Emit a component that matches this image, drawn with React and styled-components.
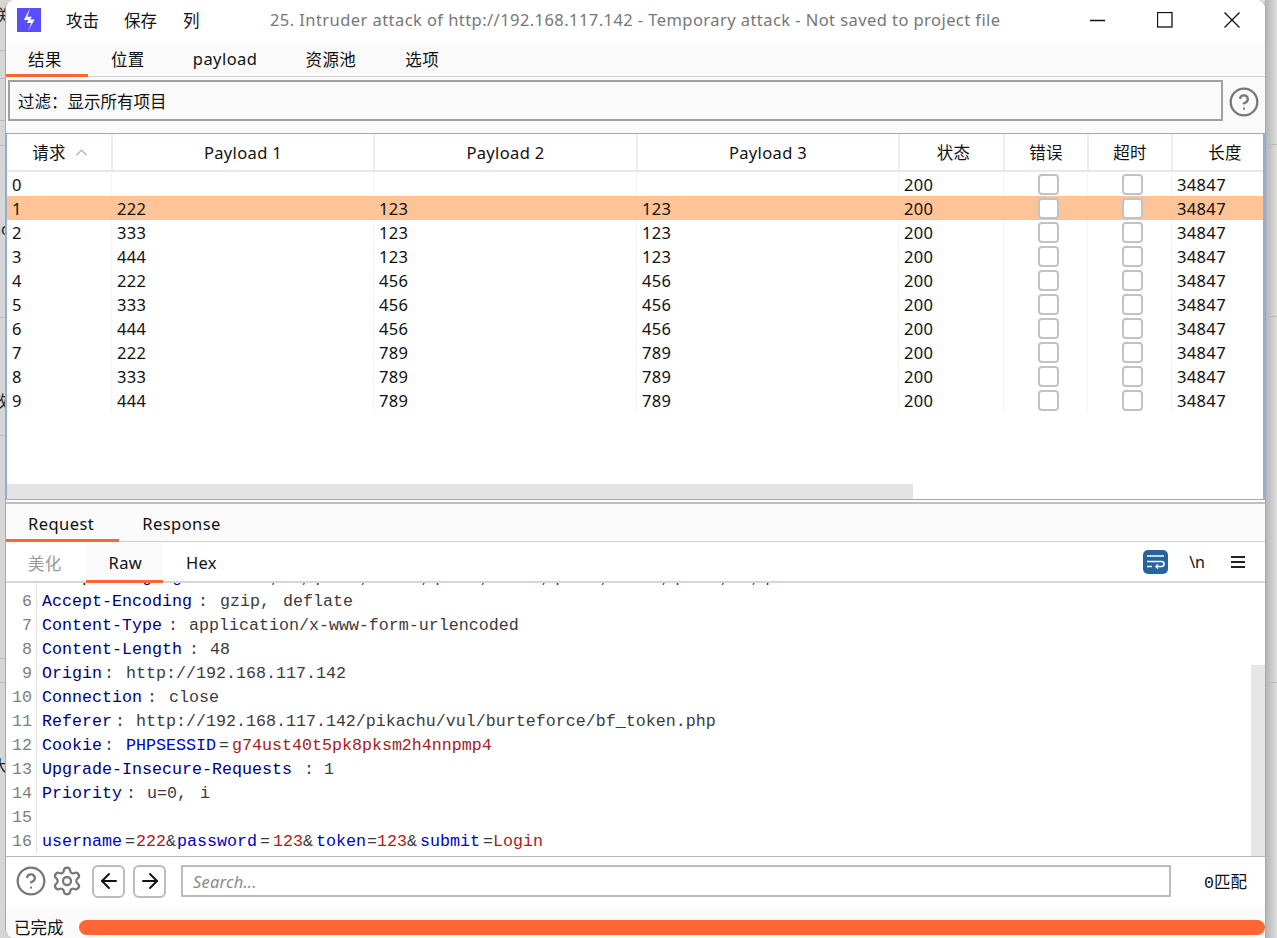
import React from "react";
import styled, { createGlobalStyle } from "styled-components";
import { ChevronUp, CircleHelp, Settings, ArrowLeft, ArrowRight } from "lucide-react";

const sans = `"Noto Sans", "Noto Sans CJK SC", sans-serif`;
const mono = `"Liberation Mono", "Noto Sans CJK SC", monospace`;

const GlobalStyle = createGlobalStyle`
  html, body {
    margin: 0;
    padding: 0;
    height: 938px;
    overflow: hidden;
    background: #dcdcdc;
  }
  * { box-sizing: border-box; }
`;

// what peeks out from behind the window
const Desktop = styled.div`
  position: relative;
  display: flex;
  width: 1277px;
  height: 938px;
  padding: 0 11px 0 5px;
  background: linear-gradient(90deg, #d6d6d6 0, #d6d6d6 1%, #dcdcdc 1%, #dcdcdc 99%, #b4b4b4 99.1%, #dedede 100%);
  font-family: ${sans};
  overflow: hidden;
`;

const DesktopLine = styled.div`
  position: absolute;
  left: ${(p) => (p.$right ? "1265px" : "0")};
  width: ${(p) => (p.$right ? "12px" : "6px")};
  top: ${(p) => p.$y}px;
  height: 1px;
  background: #b8b8b8;
`;

const DesktopGlyph = styled.div`
  position: absolute;
  left: -8px;
  top: ${(p) => p.$y}px;
  width: 13px;
  overflow: hidden;
  text-align: right;
  font-size: 16px;
  line-height: 20px;
  color: #222;
  white-space: nowrap;
`;

const Win = styled.div`
  position: relative;
  flex: 1;
  display: flex;
  flex-direction: column;
  min-width: 0;
  background: #fff;
  border-left: 1px solid #a8a8a8;
  border-right: 1px solid #a8a8a8;
  border-radius: 9px 9px 0 9px;
  font-size: 16.5px;
  color: #111;
  overflow: hidden;
`;

const TitleBar = styled.div`
  display: flex;
  align-items: center;
  height: 43px;
  flex: none;
  padding-left: 11px;
  padding-bottom: 4px;
  background: #fff;
`;

const Logo = styled.div`
  width: 24px;
  height: 24px;
  background: #5a4dff;
  display: flex;
  align-items: center;
  justify-content: center;
  margin-right: 25px;
`;

const MenuItem = styled.span`
  width: ${(p) => p.$w}px;
`;

const Title = styled.span`
  width: 729px;
  flex: none;
  color: #777;
  letter-spacing: 0.43px;
  white-space: nowrap;
  margin-left: 5px;
`;

const WinButtons = styled.div`
  display: flex;
  margin-left: 91px;
  gap: 51px;
`;

const TabBar = styled.div`
  display: flex;
  flex: none;
  height: ${(p) => p.$h}px;
  background: #fafafa;
  border-bottom: 1px solid #cfcfcf;
`;

const Tab = styled.div`
  display: flex;
  align-items: center;
  padding: ${(p) => p.$pt || 0}px ${(p) => p.$pr}px 0 ${(p) => p.$pl}px;
  border-bottom: 3px solid ${(p) => (p.$active ? "#ff6633" : "transparent")};
  margin-bottom: -1px;
  white-space: nowrap;
  letter-spacing: 0.45px;
`;

const FilterRow = styled.div`
  display: flex;
  flex: none;
  align-items: flex-start;
  height: 56px;
  padding: 3px 0 0 2px;
  background: #fafafa;
`;

const FilterBox = styled.div`
  width: 1215px;
  flex: none;
  height: 41px;
  border: 2px solid #a0a0a0;
  display: flex;
  align-items: center;
  padding-left: 8px;
`;

const HelpWrap = styled.div`
  margin: 6px 0 0 5px;
  display: flex;
  color: #777;
`;

const TableBox = styled.div`
  flex: none;
  height: 367px;
  border: 1px solid #8fb0d4;
  border-right-width: 2px;
  display: flex;
  flex-direction: column;
  background: #fff;
`;

const Columns = "104px 262px 263px 262px 105px 84px 84px 1fr";

const HeadRow = styled.div`
  display: grid;
  grid-template-columns: ${Columns};
  height: 38px;
  flex: none;
  border-bottom: 2px solid #e8e8e8;
`;

const HeadCell = styled.div`
  display: flex;
  align-items: center;
  justify-content: center;
  gap: 6px;
  padding-left: ${(p) => p.$pl || 0}px;
  border-left: ${(p) => (p.$first ? "0" : "2px solid #ececec")};
  letter-spacing: 0.35px;
  color: #111;
`;

const Row = styled.div`
  display: grid;
  grid-template-columns: ${Columns};
  height: 24px;
  flex: none;
  background: ${(p) => (p.$selected ? "#ffc398" : "#fff")};
`;

const Cell = styled.div`
  display: flex;
  align-items: center;
  padding-left: 5px;
  border-left: ${(p) => (p.$first ? "0" : "1px solid #f4f4f4")};
  border-left-color: ${(p) => (p.$selected ? "transparent" : "#f4f4f4")};
  letter-spacing: 0.35px;
`;

const CheckCell = styled(Cell)`
  justify-content: center;
  padding: 0 0 0 6px;
`;

const Check = styled.div`
  width: 21px;
  height: 21px;
  background: #fff;
  border: 2px solid #c2c2c2;
  border-radius: 4px;
`;

const TableSpace = styled.div`
  flex: 1;
`;

const HScroll = styled.div`
  height: 15px;
  width: 906px;
  flex: none;
  background: #e4e4e4;
`;

const Divider = styled.div`
  flex: none;
  height: 4px;
  background: #fff;
  border-bottom: 2px solid #c0c0c0;
`;

const SubBar = styled.div`
  display: flex;
  flex: none;
  height: 41px;
  background: #fff;
  border-bottom: 2px solid #d4d8d8;
`;

const SubTab = styled.div`
  display: flex;
  align-items: center;
  padding: 3px ${(p) => p.$pr}px 0 ${(p) => p.$pl}px;
  background: ${(p) => (p.$active ? "#fafafa" : "transparent")};
  border-bottom: 3px solid ${(p) => (p.$active ? "#ff6633" : "transparent")};
  margin-bottom: -2px;
  color: ${(p) => (p.$dim ? "#999" : "#111")};
  letter-spacing: 0.3px;
`;

const ViewTools = styled.div`
  margin-left: auto;
  display: flex;
  align-items: center;
  padding-right: 20px;
`;

const WrapButton = styled.div`
  width: 25px;
  height: 24px;
  border-radius: 5px;
  background: #26649e;
  display: flex;
  align-items: center;
  justify-content: center;
`;

const NewlineText = styled.span`
  margin: 0 26px 0 21px;
  font-size: 16px;
  line-height: 20px;
`;

const Burger = styled.div`
  width: 14px;
  height: 12px;
  border-top: 2px solid #222;
  border-bottom: 2px solid #222;
  display: flex;
  align-items: center;
  &::before {
    content: "";
    width: 100%;
    height: 2px;
    background: #222;
  }
`;

const CodePane = styled.div`
  flex: none;
  height: 273px;
  display: flex;
  overflow: hidden;
  background: #fff;
`;

const CodeBody = styled.div`
  flex: 1;
  min-width: 0;
  margin-top: -17px;
`;

const CodeLine = styled.div`
  display: flex;
  height: 24px;
  line-height: 24px;
  font-family: ${mono};
  font-size: 16.67px;
  white-space: pre;
`;

const LineNo = styled.span`
  width: 31px;
  flex: none;
  text-align: right;
  padding-right: 4px;
  color: #808080;
  border-right: 1px solid #e2e2e2;
  margin-right: 5px;
`;

const Header = styled.span`
  color: #000080;
`;

const Param = styled.span`
  color: #0000c8;
`;

const Val = styled.span`
  color: #a81c1c;
`;

const Plain = styled.span`
  color: #3c3c3c;
`;

const Sep = styled.span`
  display: inline-block;
  width: ${(p) => p.$w}px;
  padding-left: ${(p) => p.$pad || 0}px;
  color: #3c3c3c;
`;

const VScroll = styled.div`
  width: 14px;
  flex: none;
  margin-top: 82px;
  background: #e6e6e6;
`;

const SearchBar = styled.div`
  flex: none;
  height: 51px;
  display: flex;
  align-items: center;
  border-top: 1px solid #bcb8b8;
  padding: 0 0 2px 9px;
  background: #fff;
  color: #777;
`;

const GearIcon = styled(Settings)`
  margin-left: 4px;
`;

const NavButton = styled.div`
  width: 33px;
  height: 33px;
  border: 2px solid #bcbcbc;
  border-radius: 6px;
  display: flex;
  align-items: center;
  justify-content: center;
  margin-left: ${(p) => p.$ml}px;
  color: #111;
`;

const SearchBox = styled.div`
  width: 990px;
  height: 32px;
  margin-left: 15px;
  border: 2px solid #bcbcbc;
  display: flex;
  align-items: center;
  padding-left: 10px;
  font-style: italic;
  color: #8a8a8a;
  letter-spacing: 0.2px;
`;

const MatchCount = styled.span`
  margin-left: 33px;
  color: #111;
  font-family: ${mono};
  font-size: 16.5px;
`;

const StatusBar = styled.div`
  flex: 1;
  display: flex;
  align-items: center;
  background: #fafafa;
  padding: 8px 0 5px 8px;
`;

const StatusText = styled.span`
  width: 65px;
  flex: none;
`;

const Progress = styled.div`
  flex: 1;
  height: 15px;
  border-radius: 8px;
  background: #ff6633;
`;

const Icon = ({ size = 24, children, color = "currentColor", sw = 1.3 }) => (
  <svg width={size} height={size} viewBox={`0 0 ${size} ${size}`} fill="none" stroke={color} strokeWidth={sw}>
    {children}
  </svg>
);

const results = [
  ["0", "", "", ""],
  ["1", "222", "123", "123"],
  ["2", "333", "123", "123"],
  ["3", "444", "123", "123"],
  ["4", "222", "456", "456"],
  ["5", "333", "456", "456"],
  ["6", "444", "456", "456"],
  ["7", "222", "789", "789"],
  ["8", "333", "789", "789"],
  ["9", "444", "789", "789"],
];

const leftLines = [50, 78, 120, 145, 317, 435, 658, 682];
const rightLines = [144, 316, 682];

const App = () => {
  return (
    <Desktop>
      <GlobalStyle />
      {leftLines.map((y) => <DesktopLine key={y} $y={y} />)}
      {rightLines.map((y) => <DesktopLine key={y} $y={y} $right />)}
      <DesktopGlyph $y={5}>联</DesktopGlyph>
      <DesktopGlyph $y={219}>ac</DesktopGlyph>
      <DesktopGlyph $y={391}>效</DesktopGlyph>
      <DesktopGlyph $y={756}>大</DesktopGlyph>

      <Win>
        <TitleBar>
          <Logo>
            <svg width="16" height="23" viewBox="0 0 14 20" fill="#fff">
              <path d="M8 0 L2.5 10.5 L6.5 10.5 L5 13 L9 13 L6 20 L12 10 L8 10 L9.5 7.5 L5.5 7.5 Z" />
            </svg>
          </Logo>
          <MenuItem $w={58}>攻击</MenuItem>
          <MenuItem $w={59}>保存</MenuItem>
          <MenuItem $w={82}>列</MenuItem>
          <Title>25. Intruder attack of http://192.168.117.142 - Temporary attack - Not saved to project file</Title>
          <WinButtons>
            <Icon size={16} color="#111"><path d="M0 8.5 H15" /></Icon>
            <Icon size={16} color="#111"><rect x="0.5" y="0.5" width="14.5" height="14.5" /></Icon>
            <Icon size={16} color="#111"><path d="M0.5 0.5 L15.5 15.5 M15.5 0.5 L0.5 15.5" /></Icon>
          </WinButtons>
        </TitleBar>

        <TabBar $h={34}>
          <Tab $pl={22} $pr={26} $active>结果</Tab>
          <Tab $pl={23} $pr={26}>位置</Tab>
          <Tab $pl={22} $pr={26}>payload</Tab>
          <Tab $pl={22} $pr={27}>资源池</Tab>
          <Tab $pl={22} $pr={27}>选项</Tab>
        </TabBar>

        <FilterRow>
          <FilterBox>过滤：显示所有项目</FilterBox>
          <HelpWrap><CircleHelp size={32} strokeWidth={1.7} /></HelpWrap>
        </FilterRow>

        <TableBox>
          <HeadRow>
            <HeadCell $first $pl={5}>请求<ChevronUp size={19} color="#aaa" strokeWidth={1.6} /></HeadCell>
            <HeadCell>Payload 1</HeadCell>
            <HeadCell>Payload 2</HeadCell>
            <HeadCell>Payload 3</HeadCell>
            <HeadCell $pl={4}>状态</HeadCell>
            <HeadCell>错误</HeadCell>
            <HeadCell>超时</HeadCell>
            <HeadCell $pl={14}>长度</HeadCell>
          </HeadRow>
          {results.map((r) => {
            const selected = r[0] === "1";
            return (
              <Row key={r[0]} $selected={selected}>
                <Cell $first>{r[0]}</Cell>
                <Cell $selected={selected}>{r[1]}</Cell>
                <Cell $selected={selected}>{r[2]}</Cell>
                <Cell $selected={selected}>{r[3]}</Cell>
                <Cell $selected={selected}>200</Cell>
                <CheckCell $selected={selected}><Check /></CheckCell>
                <CheckCell $selected={selected}><Check /></CheckCell>
                <Cell $selected={selected}>34847</Cell>
              </Row>
            );
          })}
          <TableSpace />
          <HScroll />
        </TableBox>

        <Divider />

        <TabBar $h={38}>
          <Tab $pl={22} $pr={25} $pt={3} $active>Request</Tab>
          <Tab $pl={23} $pr={25} $pt={3}>Response</Tab>
        </TabBar>

        <SubBar>
          <SubTab $pl={22} $pr={24} $dim>美化</SubTab>
          <SubTab $pl={23} $pr={21} $active>Raw</SubTab>
          <SubTab $pl={23} $pr={21}>Hex</SubTab>
          <ViewTools>
            <WrapButton>
              <svg width="19" height="15" viewBox="0 0 19 15" fill="none" stroke="#fff" strokeWidth="1.5">
                <path d="M1 2 H18" />
                <path d="M1 7.5 H15.5 A2.4 2.4 0 0 1 15.5 12.5 H10" />
                <path d="M12 10.3 L9.7 12.5 L12 14.7" strokeWidth="1.2" />
                <path d="M1 12.5 H6" />
              </svg>
            </WrapButton>
            <NewlineText>\n</NewlineText>
            <Burger />
          </ViewTools>
        </SubBar>

        <CodePane>
          <CodeBody>
            <CodeLine><LineNo>5</LineNo><Header>Accept-Language</Header><Sep $w={28} $pad={6}>:</Sep><Plain>zh-CN,zh;q=0.8,zh-TW;q=0.7,zh-HK;q=0.5,en-US;q=0.3,en;q=0.2</Plain></CodeLine>
            <CodeLine><LineNo>6</LineNo><Header>Accept-Encoding</Header><Sep $w={28} $pad={6}>:</Sep><Plain>gzip,</Plain><Sep $w={13} /><Plain>deflate</Plain></CodeLine>
            <CodeLine><LineNo>7</LineNo><Header>Content-Type</Header><Sep $w={27} $pad={6}>:</Sep><Plain>application/x-www-form-urlencoded</Plain></CodeLine>
            <CodeLine><LineNo>8</LineNo><Header>Content-Length</Header><Sep $w={28} $pad={7}>:</Sep><Plain>48</Plain></CodeLine>
            <CodeLine><LineNo>9</LineNo><Header>Origin</Header><Sep $w={24} $pad={2}>:</Sep><Plain>http://192.168.117.142</Plain></CodeLine>
            <CodeLine><LineNo>10</LineNo><Header>Connection</Header><Sep $w={27} $pad={5}>:</Sep><Plain>close</Plain></CodeLine>
            <CodeLine><LineNo>11</LineNo><Header>Referer</Header><Sep $w={24} $pad={3}>:</Sep><Plain>http://192.168.117.142/pikachu/vul/burteforce/bf_token.php</Plain></CodeLine>
            <CodeLine><LineNo>12</LineNo><Header>Cookie</Header><Sep $w={24} $pad={2}>:</Sep><Param>PHPSESSID</Param><Sep $w={16} $pad={3}>=</Sep><Val>g74ust40t5pk8pksm2h4nnpmp4</Val></CodeLine>
            <CodeLine><LineNo>13</LineNo><Header>Upgrade-Insecure-Requests</Header><Sep $w={32} $pad={12}>:</Sep><Plain>1</Plain></CodeLine>
            <CodeLine><LineNo>14</LineNo><Header>Priority</Header><Sep $w={25} $pad={4}>:</Sep><Plain>u=0,</Plain><Sep $w={13} /><Plain>i</Plain></CodeLine>
            <CodeLine><LineNo>15</LineNo></CodeLine>
            <CodeLine>
              <LineNo>16</LineNo>
              <Param>username</Param><Sep $w={14} $pad={3}>=</Sep><Val>222</Val><Sep $w={11}>&amp;</Sep>
              <Param>password</Param><Sep $w={16} $pad={3}>=</Sep><Val>123</Val><Sep $w={13}>&amp;</Sep>
              <Param>token</Param><Sep $w={11} $pad={1}>=</Sep><Val>123</Val><Sep $w={13}>&amp;</Sep>
              <Param>submit</Param><Sep $w={13} $pad={3}>=</Sep><Val>Login</Val>
            </CodeLine>
          </CodeBody>
          <VScroll />
        </CodePane>

        <SearchBar>
          <CircleHelp size={32} strokeWidth={1.7} />
          <GearIcon size={32} strokeWidth={1.7} />
          <NavButton $ml={9}><ArrowLeft size={24} strokeWidth={1.9} /></NavButton>
          <NavButton $ml={8}><ArrowRight size={24} strokeWidth={1.9} /></NavButton>
          <SearchBox>Search...</SearchBox>
          <MatchCount>0匹配</MatchCount>
        </SearchBar>

        <StatusBar>
          <StatusText>已完成</StatusText>
          <Progress />
        </StatusBar>
      </Win>
    </Desktop>
  );
};

export default App;
